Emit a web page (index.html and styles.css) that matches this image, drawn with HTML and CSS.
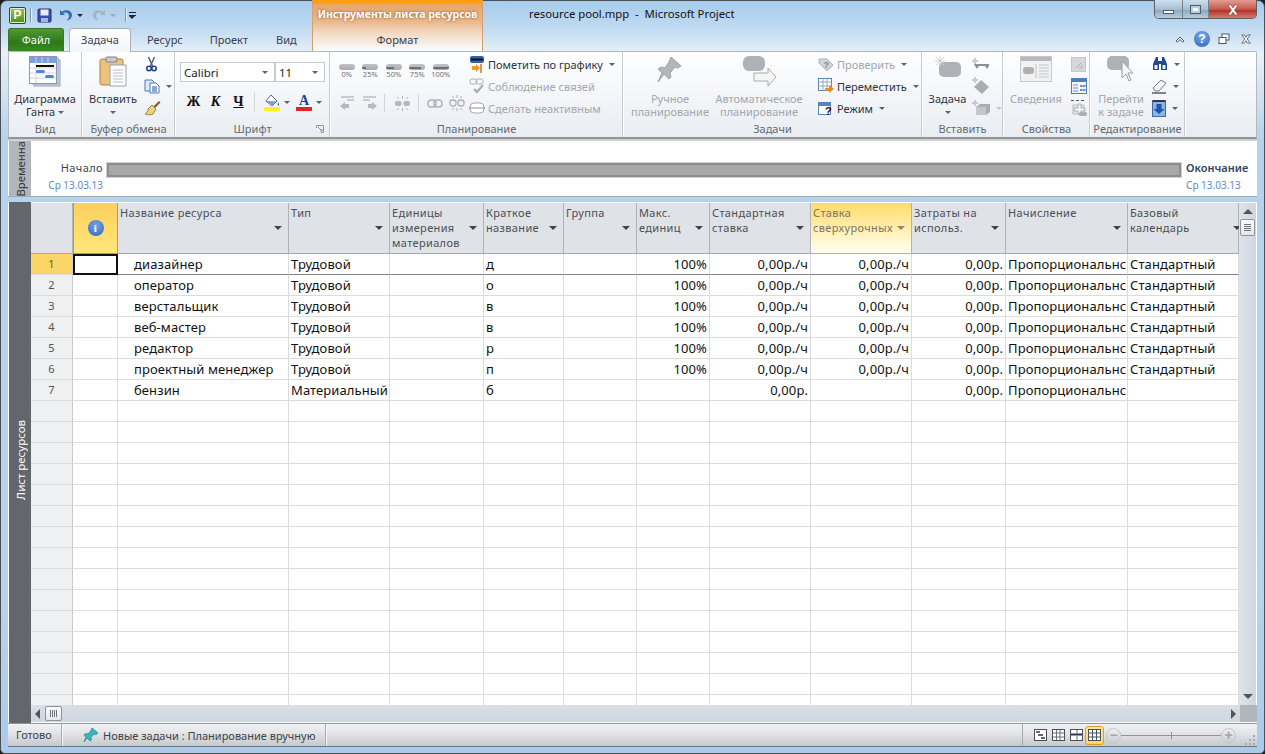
FILE: index.html
```html
<!DOCTYPE html>
<html lang="ru">
<head>
<meta charset="utf-8">
<title>resource pool.mpp - Microsoft Project</title>
<link rel="stylesheet" href="styles.css">
</head>
<body>
<div class="window">
  <header class="chrome">
    <div class="chrome-left">
      <div class="qat">
        <span class="app-logo">P</span>
        <span class="qat-sep"></span>
        <svg class="qat-save" width="15" height="15" viewBox="0 0 15 15"><rect x="1" y="1" width="13" height="13" rx="1" fill="#3b4fa8" stroke="#27306f"/><rect x="3.5" y="1.5" width="8" height="6" fill="#e8ecf6"/><rect x="4" y="10" width="7" height="4" fill="#a9b4d8"/></svg>
        <svg class="qat-undo" width="14" height="14" viewBox="0 0 14 14"><path d="M1 2v5h5L4.2 5.2C6.5 3.6 10 4.6 10 8c0 2-1 3.400-2.500 4.500C11 12 13 9.800 13 7.200 13 2.700 7.500.5 3.200 3.700z" fill="#2f6db5"/></svg>
        <span class="qat-arrow"></span>
        <svg class="qat-redo" width="14" height="14" viewBox="0 0 14 14"><path d="M13 2v5H8l1.800-1.800C7.500 3.600 4 4.600 4 8c0 2 1 3.400 2.500 4.500C3 12 1 9.800 1 7.200 1 2.700 6.500.5 10.800 3.700z" fill="#a9b2ba"/></svg>
        <span class="qat-arrow muted"></span>
        <span class="qat-sep"></span>
        <span class="qat-custom"></span>
      </div>
      <nav class="tabs">
        <span class="tab-file">Файл</span>
        <span class="tab tab-active">Задача</span>
        <span class="tab tab-res">Ресурс</span>
        <span class="tab tab-proj">Проект</span>
        <span class="tab tab-view">Вид</span>
      </nav>
    </div>
    <div class="context">
      <div class="context-title">Инструменты листа ресурсов</div>
      <div class="context-tab">Формат</div>
    </div>
    <div class="title-wrap"><div class="title">resource pool.mpp&nbsp; -&nbsp; Microsoft Project</div></div>
    <div class="chrome-right">
      <div class="win-buttons">
        <span class="win-btn win-min"><i></i></span>
        <span class="win-btn win-max"><i></i></span>
        <span class="win-btn win-close"><svg width="14" height="12" viewBox="0 0 14 12"><path d="M2 1h3l2 3 2-3h3L8.500 6 12 11H9L7 8l-2 3H2l3.500-5z" fill="#fff" stroke="#7b5350" stroke-width=".6"/></svg></span>
      </div>
      <div class="help-row">
        <svg class="h-up" width="10" height="8" viewBox="0 0 10 8"><path d="M1 6l4-4 4 4-1.500 1L5 4.600 2.500 7z" fill="#fff" stroke="#4c5966"/></svg>
        <span class="help">?</span>
        <svg class="h-rest" width="12" height="12" viewBox="0 0 12 12"><rect x="4" y="1" width="7" height="6" fill="#fff" stroke="#4c5966"/><rect x="1" y="4.500" width="7" height="6" fill="#fff" stroke="#4c5966"/></svg>
        <svg class="h-x" width="12" height="10" viewBox="0 0 14 12"><path d="M2 1h3l2 3 2-3h3L8.500 6 12 11H9L7 8l-2 3H2l3.500-5z" fill="#fff" stroke="#4c5966"/></svg>
      </div>
    </div>
  </header>

  <section class="ribbon">
    <div class="group g-view">
      <div class="group-body center">
        <div class="big w-gantt">
          <div class="big-icon"><svg width="32" height="32" viewBox="0 0 32 32"><rect x="5" y="4" width="26" height="26" fill="#d5dbe6" stroke="#9aa4b8"/><rect x="3" y="2" width="26" height="26" fill="#e6eaf1" stroke="#9aa4b8"/><rect x=".5" y=".5" width="27" height="27" fill="#fff" stroke="#8b97b3"/><rect x="1" y="1" width="26" height="6" fill="#7b9fe0"/><path d="M7 1v26M13 1v6M19 1v6M1 12h26M1 17h26M1 22h26" stroke="#c9d3e6"/><rect x="7" y="9" width="18" height="2" fill="#111"/><rect x="7" y="14" width="9" height="3" rx="1.500" fill="#4f87d6"/><rect x="16" y="19" width="9" height="3" rx="1.500" fill="#4f87d6"/></svg></div>
          <span>Диаграмма</span><span>Ганта <i class="dd"></i></span>
        </div>
      </div>
      <div class="group-label">Вид</div>
    </div>
    <div class="group g-clip">
      <div class="group-body">
        <div class="big w-paste">
          <div class="big-icon"><svg width="28" height="32" viewBox="0 0 28 32"><rect x="1" y="3" width="23" height="26" rx="2" fill="#eec27a" stroke="#a98348"/><rect x="7" y="1" width="11" height="5" rx="1" fill="#c9ccd2" stroke="#7c7f85"/><path d="M11 9h16v21H11z" fill="#fff" stroke="#9aa0a8"/><path d="M14 14h10M14 17h10M14 20h10M14 23h10M14 26h10" stroke="#b7bcc4"/></svg></div>
          <span>Вставить</span><span><i class="dd"></i></span>
        </div>
        <div class="small-col icons-only clip-col">
          <div class="small"><svg class="i-scissors" width="11" height="16" viewBox="0 0 11 16"><path d="M2.500 1l4 9M8.500 1l-4 9" stroke="#50637a" stroke-width="1.500"/><circle cx="3" cy="12.500" r="2.200" fill="none" stroke="#24408c" stroke-width="1.600"/><circle cx="8" cy="12.500" r="2.200" fill="none" stroke="#24408c" stroke-width="1.600"/></svg></div>
          <div class="small"><svg width="16" height="15" viewBox="0 0 16 15"><path d="M1 1h7l2 2v9H1z" fill="#dfe9f7" stroke="#4c79b8"/><path d="M6 4h6l3 3v7H6z" fill="#fff" stroke="#4c79b8"/><path d="M8 8h5M8 10h5M8 12h5" stroke="#274e92"/></svg><i class="dd d-gap"></i></div>
          <div class="small"><svg width="17" height="16" viewBox="0 0 17 16"><path d="M9 7l6-6 1.500 1.500-6 6z" fill="#7d5b33"/><path d="M8 5l4 4-3 5c-3 1-6 1-8 0 2-1 3-3 3-5z" fill="#efd37a" stroke="#9a8042"/></svg></div>
        </div>
      </div>
      <div class="group-label">Буфер обмена</div>
    </div>
    <div class="group g-font">
      <div class="group-body col">
        <div class="font-row">
          <span class="select sel-font">Calibri<i class="dd"></i></span>
          <span class="select sel-size">11<i class="dd"></i></span>
        </div>
        <div class="font-fmt">
          <b class="f-b">Ж</b><b class="f-i">К</b><b class="f-u">Ч</b>
          <span class="fmt-sep"></span>
          <span class="fmt-icon"><svg width="16" height="17" viewBox="0 0 16 17"><path d="M7 1l6 6-5 5-6-5z" fill="#fff" stroke="#4c6a96"/><path d="M2 7h10l-4 5z" fill="#7fa3d4"/><path d="M14 8c1 2 1.500 3 .5 4-1-1-1-2-.5-4z" fill="#3a5f9c"/><rect y="13" width="16" height="4" fill="#ffef1e"/></svg><i class="dd d-gap"></i></span>
          <span class="fmt-icon f-color"><span class="a-glyph">A</span><i class="dd d-gap"></i></span>
        </div>
      </div>
      <div class="group-label">Шрифт<svg class="launcher" width="8" height="8" viewBox="0 0 8 8"><path d="M.5 3V.5H7.500V7.500H5" fill="none" stroke="#8e959c"/><path d="M2 2l4 4M4 6h2V4" fill="none" stroke="#8e959c"/></svg></div>
    </div>
    <div class="group g-plan">
      <div class="group-body">
        <div class="plan-left">
          <div class="pct-row">
            <span class="pct"><i class="pbar"></i>0%</span>
            <span class="pct"><i class="pbar p25"></i>25%</span>
            <span class="pct"><i class="pbar p50"></i>50%</span>
            <span class="pct"><i class="pbar p75"></i>75%</span>
            <span class="pct"><i class="pbar p100"></i>100%</span>
          </div>
          <div class="link-row">
            <svg width="17" height="15" viewBox="0 0 17 15"><path d="M2 1h13M8 4h7" stroke="#9fa5ab"/><path d="M1 10l5-4v2h4v4H6v2z" fill="#b5babf"/></svg>
            <svg class="l-in" width="17" height="15" viewBox="0 0 17 15"><path d="M2 1h13M2 4h7" stroke="#9fa5ab"/><path d="M16 10l-5-4v2H7v4h4v2z" fill="#b5babf"/></svg>
            <span class="fmt-sep plan-sep"></span>
            <svg class="l-split" width="17" height="17" viewBox="0 0 17 17"><rect x="1" y="6" width="6.500" height="5" rx="2" fill="#b4b8bc"/><rect x="9.500" y="6" width="6.500" height="5" rx="2" fill="#b4b8bc"/><path d="M8.500 1v3M8.500 13v3M3 2l2 2M14 2l-2 2M3 15l2-2M14 15l-2-2" stroke="#b4b8bc"/></svg>
            <span class="fmt-sep plan-sep2"></span>
            <svg class="l-link" width="16" height="9" viewBox="0 0 16 9"><rect x="1" y="1" width="8" height="7" rx="3" fill="none" stroke="#aeb2b7" stroke-width="1.400"/><rect x="7" y="1" width="8" height="7" rx="3" fill="none" stroke="#aeb2b7" stroke-width="1.400"/></svg>
            <svg class="l-unlink" width="16" height="16" viewBox="0 0 16 16"><rect x="1" y="5" width="6" height="6" rx="2.500" fill="none" stroke="#aeb2b7" stroke-width="1.300"/><rect x="9" y="5" width="6" height="6" rx="2.500" fill="none" stroke="#aeb2b7" stroke-width="1.300"/><path d="M8 0v3M8 13v3M3 1l2 2M13 1l-2 2M3 15l2-2M13 15l-2-2" stroke="#aeb2b7"/></svg>
          </div>
        </div>
        <div class="small-col plan-col">
          <div class="small"><svg width="16" height="18" viewBox="0 0 16 18"><rect x="1" y="1" width="14" height="7" rx="2" fill="#2e62b4"/><rect x="2" y="3.500" width="12" height="2" fill="#111"/><path d="M12 9v9" stroke="#d07a1c" stroke-width="1.500"/><path d="M3 11h4V9l4 4-4 4v-2H3z" fill="#f19a23"/></svg><span>Пометить по графику</span><i class="dd d-gap"></i></div>
          <div class="small dis"><svg width="16" height="16" viewBox="0 0 16 16"><rect x="1" y="1" width="7" height="5" rx="2" fill="none" stroke="#aeb2b7"/><rect x="7" y="1" width="7" height="5" rx="2" fill="none" stroke="#aeb2b7"/><path d="M5 11l3 3 6-7" fill="none" stroke="#a4a8ad" stroke-width="2"/></svg><span>Соблюдение связей</span></div>
          <div class="small dis"><svg width="16" height="12" viewBox="0 0 16 12"><rect x="1" y="1" width="14" height="10" rx="4" fill="#fff" stroke="#a5a9ae"/><path d="M0 6h16" stroke="#8f9398"/></svg><span>Сделать неактивным</span></div>
        </div>
      </div>
      <div class="group-label">Планирование</div>
    </div>
    <div class="group g-tasks">
      <div class="group-body">
        <div class="big dis w-manual">
          <div class="big-icon"><svg width="26" height="28" viewBox="0 0 26 28"><path d="M14 1l10 9-3 2-3-1-5 6 1 4-2 2-5-5-6 8 4-9-4-4 3-2 4 1 4-6z" fill="#b3b6ba" stroke="#9ea1a5"/></svg></div>
          <span>Ручное</span><span>планирование</span>
        </div>
        <div class="big dis w-auto">
          <div class="big-icon"><svg width="34" height="32" viewBox="0 0 34 32"><rect x="1" y="0" width="22" height="15" rx="6" fill="#aeb1b5"/><path d="M12 17h14v-5l8 9-8 9v-5H12z" fill="#f5f5f6" stroke="#a8abaf"/></svg></div>
          <span>Автоматическое</span><span>планирование</span>
        </div>
        <div class="small-col task-col">
          <div class="small dis"><svg width="16" height="16" viewBox="0 0 16 16"><path d="M1 3h8l6 6-6 6-8-8z" fill="#d2d4d7" stroke="#aeb1b5"/><text x="5.500" y="12" class="q">?</text></svg><span>Проверить</span><i class="dd d-gap"></i></div>
          <div class="small"><svg width="16" height="16" viewBox="0 0 16 16"><rect x=".5" y=".5" width="13" height="12" fill="#fff" stroke="#5b82ba"/><path d="M.5 4h13M.5 8h13M5 .5v12M9 .5v12" stroke="#8fa9cf"/><path d="M7 10h4V7l5 4-5 4v-2H7z" fill="#ee8a1c"/></svg><span>Переместить</span><i class="dd d-gap"></i></div>
          <div class="small"><svg width="16" height="16" viewBox="0 0 16 16"><rect x=".5" y="2.500" width="12" height="12" fill="#fff" stroke="#5b82ba"/><rect x="1" y="3" width="11" height="3" fill="#5b82ba"/><text x="7" y="15" class="qq">?</text></svg><span>Режим</span><i class="dd d-gap"></i></div>
        </div>
      </div>
      <div class="group-label">Задачи</div>
    </div>
    <div class="group g-insert">
      <div class="group-body">
        <div class="big w-itask">
          <div class="big-icon"><svg width="28" height="22" viewBox="0 0 28 22"><rect x="5" y="6" width="22" height="15" rx="5" fill="#aeb1b5"/><path d="M6 0v10M1 5h10M2 1l8 8M10 1L2 9" stroke="#cfd1d4"/></svg></div>
          <span>Задача</span><span><i class="dd"></i></span>
        </div>
        <div class="small-col icons-only ins-col">
          <div class="small"><svg width="18" height="13" viewBox="0 0 18 13"><path d="M3 0v6M0 3h6" stroke="#c9cbce" stroke-width="2"/><path d="M2 6h15v2l-2 3-2-3H7l-2 3-2-3z" fill="#8d9094"/></svg></div>
          <div class="small"><svg width="18" height="18" viewBox="0 0 18 18"><path d="M3 0v6M0 3h6" stroke="#c9cbce" stroke-width="2"/><path d="M9 3l8 7-7 7-8-7z" fill="#aaadb1"/></svg></div>
          <div class="small"><svg width="18" height="16" viewBox="0 0 18 16"><path d="M3 0v6M0 3h6" stroke="#c9cbce" stroke-width="2"/><path d="M4 7h10v8H4z" fill="#c4c6c9"/><path d="M4 7l4-3h10l-4 3zM14 7l4-3v8l-4 3z" fill="#a9acb0"/></svg><i class="dd d-gap dim"></i></div>
        </div>
      </div>
      <div class="group-label">Вставить</div>
    </div>
    <div class="group g-prop">
      <div class="group-body">
        <div class="big dis w-info">
          <div class="big-icon"><svg width="32" height="26" viewBox="0 0 32 26"><rect x=".5" y=".5" width="31" height="25" fill="#f2f2f3" stroke="#c7c9cc"/><rect x="1" y="1" width="30" height="4" fill="#b6b8bb"/><rect x="3" y="11" width="11" height="7" rx="3" fill="#aeb0b3"/><path d="M16 8v14M19 9h10M19 12h10M19 15h10M19 18h10M19 21h10" stroke="#c3c5c8"/></svg></div>
          <span>Сведения</span>
        </div>
        <div class="small-col icons-only prop-col">
          <div class="small"><svg width="15" height="15" viewBox="0 0 15 15"><rect x=".5" y=".5" width="14" height="14" fill="#d5d7da" stroke="#c5c7ca"/><path d="M5 11l5-5M8 11h3V8" stroke="#b0b2b5" fill="none"/></svg></div>
          <div class="small"><svg width="16" height="16" viewBox="0 0 16 16"><rect x=".5" y=".5" width="15" height="15" fill="#f3f7fc" stroke="#4e7fbd"/><rect x="1" y="1" width="14" height="3" fill="#4e7fbd"/><path d="M2 7h5M2 10h5M2 13h5" stroke="#6d8fbf"/><rect x="9" y="7" width="2.500" height="2" fill="#6d8fbf"/><rect x="12" y="7" width="2.500" height="2" fill="#6d8fbf"/><rect x="9" y="11" width="2.500" height="2" fill="#6d8fbf"/><rect x="12" y="11" width="2.500" height="2" fill="#6d8fbf"/></svg></div>
          <div class="small"><svg width="16" height="17" viewBox="0 0 16 17"><path d="M0 .5h3M5 .5h3M10 .5h3" stroke="#555"/><path d="M2 5h11v9H2z" fill="#e5e6e8" stroke="#bbbdc0"/><path d="M7 4h3v4h4v3h-4v3H7v-3H3V8h4z" fill="#f3f3f4" stroke="#aeb0b3"/><rect x="8" y="12" width="8" height="4" rx="1.500" fill="#aeb0b3"/></svg></div>
        </div>
      </div>
      <div class="group-label">Свойства</div>
    </div>
    <div class="group g-edit">
      <div class="group-body">
        <div class="big dis w-goto">
          <div class="big-icon"><svg width="28" height="28" viewBox="0 0 28 28"><rect x="0" y="0" width="22" height="14" rx="5" fill="#aeb1b5"/><path d="M15 5v17l4-4 3 7 2-1-3-7h5z" fill="#f3f3f4" stroke="#9da0a4"/></svg></div>
          <span>Перейти</span><span>к задаче</span>
        </div>
        <div class="small-col icons-only edit-col">
          <div class="small"><svg width="16" height="14" viewBox="0 0 16 14"><path d="M4 0h2v4h4V0h2l3 7v6H9V7H7v6H1V7z" fill="#24478f"/><rect x="2.500" y="8" width="3" height="4" fill="#e8eefb"/><rect x="10.500" y="8" width="3" height="4" fill="#e8eefb"/></svg><i class="dd d-gap"></i></div>
          <div class="small"><svg width="15" height="15" viewBox="0 0 15 15"><path d="M1 9l8-8 5 3-7 8H3z" fill="#f2f4f8" stroke="#6e7b91"/><path d="M0 14h14" stroke="#111"/></svg><i class="dd d-gap"></i></div>
          <div class="small"><svg width="14" height="17" viewBox="0 0 14 17"><rect x=".5" y="1" width="13" height="15.500" fill="#8eb2e2" stroke="#3d69ad"/><path d="M.5 1h13" stroke="#111" stroke-width="1.400"/><path d="M4.500 4h5v5h3L7 14 1.500 9h3z" fill="#1e55a8"/></svg><i class="dd d-gap"></i></div>
        </div>
      </div>
      <div class="group-label">Редактирование</div>
    </div>
  </section>

  <section class="timeline">
    <div class="timeline-tag"><span class="v-text">Временна</span></div>
    <div class="tl-start"><div class="tl-name">Начало</div><div class="tl-date">Ср 13.03.13</div></div>
    <div class="tl-bar"></div>
    <div class="tl-end"><div class="tl-name strong">Окончание</div><div class="tl-date">Ср 13.03.13</div></div>
  </section>

  <section class="sheet">
    <div class="side"><span class="v-text">Лист ресурсов</span></div>
    <div class="sheet-main">
      <div class="sheet-top">
        <div class="table-wrap">
          <table class="grid">
            <colgroup>
              <col class="c-h"><col class="c-info"><col class="c-name"><col class="c-type"><col class="c-units"><col class="c-short"><col class="c-group"><col class="c-max"><col class="c-std"><col class="c-over"><col class="c-cost"><col class="c-acc"><col class="c-cal">
            </colgroup>
            <thead>
              <tr>
                <th class="corner"></th>
                <th class="hot info-h"><span class="info-dot">i</span></th>
                <th>Название ресурса<i class="fa"></i></th>
                <th>Тип<i class="fa"></i></th>
                <th>Единицы измерения материалов<i class="fa"></i></th>
                <th>Краткое<br>название<i class="fa"></i></th>
                <th>Группа<i class="fa"></i></th>
                <th>Макс.<br>единиц<i class="fa"></i></th>
                <th>Стандартная<br>ставка<i class="fa"></i></th>
                <th class="soft">Ставка<br>сверхурочных<i class="fa"></i></th>
                <th>Затраты на<br>использ.<i class="fa"></i></th>
                <th>Начисление<i class="fa"></i></th>
                <th>Базовый<br>календарь<i class="fa"></i></th>
              </tr>
            </thead>
            <tbody>
              <tr class="first"><th class="rh rh-on">1</th><td class="sel"></td><td class="nm">диазайнер</td><td>Трудовой</td><td></td><td>д</td><td></td><td class="r">100%</td><td class="r">0,00р./ч</td><td class="r">0,00р./ч</td><td class="r">0,00р.</td><td class="clip">Пропорциональнс</td><td>Стандартный</td></tr>
              <tr><th class="rh">2</th><td></td><td class="nm">оператор</td><td>Трудовой</td><td></td><td>о</td><td></td><td class="r">100%</td><td class="r">0,00р./ч</td><td class="r">0,00р./ч</td><td class="r">0,00р.</td><td class="clip">Пропорциональнс</td><td>Стандартный</td></tr>
              <tr><th class="rh">3</th><td></td><td class="nm">верстальщик</td><td>Трудовой</td><td></td><td>в</td><td></td><td class="r">100%</td><td class="r">0,00р./ч</td><td class="r">0,00р./ч</td><td class="r">0,00р.</td><td class="clip">Пропорциональнс</td><td>Стандартный</td></tr>
              <tr><th class="rh">4</th><td></td><td class="nm">веб-мастер</td><td>Трудовой</td><td></td><td>в</td><td></td><td class="r">100%</td><td class="r">0,00р./ч</td><td class="r">0,00р./ч</td><td class="r">0,00р.</td><td class="clip">Пропорциональнс</td><td>Стандартный</td></tr>
              <tr><th class="rh">5</th><td></td><td class="nm">редактор</td><td>Трудовой</td><td></td><td>р</td><td></td><td class="r">100%</td><td class="r">0,00р./ч</td><td class="r">0,00р./ч</td><td class="r">0,00р.</td><td class="clip">Пропорциональнс</td><td>Стандартный</td></tr>
              <tr><th class="rh">6</th><td></td><td class="nm">проектный менеджер</td><td>Трудовой</td><td></td><td>п</td><td></td><td class="r">100%</td><td class="r">0,00р./ч</td><td class="r">0,00р./ч</td><td class="r">0,00р.</td><td class="clip">Пропорциональнс</td><td>Стандартный</td></tr>
              <tr><th class="rh">7</th><td></td><td class="nm">бензин</td><td>Материальный</td><td></td><td>б</td><td></td><td></td><td class="r">0,00р.</td><td></td><td class="r">0,00р.</td><td class="clip">Пропорциональнс</td><td></td></tr>
              <tr><th class="rh"></th><td></td><td></td><td></td><td></td><td></td><td></td><td></td><td></td><td></td><td></td><td></td><td></td></tr>
              <tr><th class="rh"></th><td></td><td></td><td></td><td></td><td></td><td></td><td></td><td></td><td></td><td></td><td></td><td></td></tr>
              <tr><th class="rh"></th><td></td><td></td><td></td><td></td><td></td><td></td><td></td><td></td><td></td><td></td><td></td><td></td></tr>
              <tr><th class="rh"></th><td></td><td></td><td></td><td></td><td></td><td></td><td></td><td></td><td></td><td></td><td></td><td></td></tr>
              <tr><th class="rh"></th><td></td><td></td><td></td><td></td><td></td><td></td><td></td><td></td><td></td><td></td><td></td><td></td></tr>
              <tr><th class="rh"></th><td></td><td></td><td></td><td></td><td></td><td></td><td></td><td></td><td></td><td></td><td></td><td></td></tr>
              <tr><th class="rh"></th><td></td><td></td><td></td><td></td><td></td><td></td><td></td><td></td><td></td><td></td><td></td><td></td></tr>
              <tr><th class="rh"></th><td></td><td></td><td></td><td></td><td></td><td></td><td></td><td></td><td></td><td></td><td></td><td></td></tr>
              <tr><th class="rh"></th><td></td><td></td><td></td><td></td><td></td><td></td><td></td><td></td><td></td><td></td><td></td><td></td></tr>
              <tr><th class="rh"></th><td></td><td></td><td></td><td></td><td></td><td></td><td></td><td></td><td></td><td></td><td></td><td></td></tr>
              <tr><th class="rh"></th><td></td><td></td><td></td><td></td><td></td><td></td><td></td><td></td><td></td><td></td><td></td><td></td></tr>
              <tr><th class="rh"></th><td></td><td></td><td></td><td></td><td></td><td></td><td></td><td></td><td></td><td></td><td></td><td></td></tr>
              <tr><th class="rh"></th><td></td><td></td><td></td><td></td><td></td><td></td><td></td><td></td><td></td><td></td><td></td><td></td></tr>
              <tr><th class="rh"></th><td></td><td></td><td></td><td></td><td></td><td></td><td></td><td></td><td></td><td></td><td></td><td></td></tr>
              <tr><th class="rh"></th><td></td><td></td><td></td><td></td><td></td><td></td><td></td><td></td><td></td><td></td><td></td><td></td></tr>
            </tbody>
          </table>
        </div>
        <div class="vscroll">
          <i class="tri tri-up"></i>
          <span class="thumb-v"></span>
          <i class="tri tri-down"></i>
        </div>
      </div>
      <div class="hscroll">
        <i class="tri tri-left"></i>
        <span class="thumb-h"></span>
        <i class="tri tri-right"></i>
        <span class="hcorner"></span>
      </div>
    </div>
  </section>

  <footer class="status">
    <span class="st-ready">Готово</span>
    <span class="st-mode">
      <svg width="16" height="16" viewBox="0 0 16 16"><path d="M9 1l6 5-2 1.500-2-.5-3 3.500.5 2.500-1.500 1L4 11 1 15l2-5-2-2 1.500-1.500 2.500.5 3-3.500z" fill="#38b8bd" stroke="#1d7f86" stroke-width=".7"/></svg>
      Новые задачи : Планирование вручную
    </span>
    <span class="st-fill"></span>
    <span class="st-views">
      <span class="vw"><svg width="13" height="12" viewBox="0 0 13 12"><rect x=".5" y=".5" width="12" height="11" fill="#fff" stroke="#4b5058"/><path d="M2 3h4M4 6h5M7 9h4" stroke="#30343a" stroke-width="1.400"/></svg></span>
      <span class="vw"><svg width="13" height="12" viewBox="0 0 13 12"><rect x=".5" y=".5" width="12" height="11" fill="#fff" stroke="#4b5058"/><path d="M4.500 1v10M8 1v10M1 4h11M1 8h11" stroke="#6d7278"/></svg></span>
      <span class="vw"><svg width="13" height="12" viewBox="0 0 13 12"><rect x=".5" y=".5" width="12" height="11" fill="#fff" stroke="#4b5058"/><path d="M1 5.500h11" stroke="#30343a" stroke-width="2"/><path d="M7 1v4M7 7v4" stroke="#6d7278"/></svg></span>
      <span class="vw vw-on"><svg width="13" height="12" viewBox="0 0 13 12"><rect x=".5" y=".5" width="12" height="11" fill="#fff" stroke="#4b5058"/><path d="M4.500 1v10M8.500 1v10M1 4h11M1 8h11" stroke="#4b5058"/></svg></span>
    </span>
    <span class="zoom">
      <span class="zb">−</span>
      <span class="ztrack"><i></i></span>
      <span class="zb">+</span>
    </span>
    <svg class="grip" width="11" height="11" viewBox="0 0 11 11"><path d="M9 1h2v2H9zM5 5h2v2H5zM9 5h2v2H9zM1 9h2v2H1zM5 9h2v2H5zM9 9h2v2H9z" fill="#a7abb1"/></svg>
  </footer>
</div>
</body>
</html>
```
FILE: styles.css
```css
* { box-sizing: border-box; }
html, body { margin: 0; height: 100%; }
body { background: #1c1f22; overflow: hidden; font-family: "Noto Sans", "Open Sans", sans-serif; font-size: 11px; color: #3c4046; }
i { font-style: normal; display: inline-block; }

.window {
  width: 1265px; height: 754px; padding: 0 8px 6px 8px;
  border: 1px solid #4a5056; border-radius: 7px 7px 5px 5px;
  display: flex; flex-direction: column;
  background: linear-gradient(#a6cbec 0, #c3dcf2 30px, #e8f1f9 52px, #b6d2ec 140px, #b7d3ed 600px, #a9cbe9 100%);
}
.window > * { margin-left: -1px; margin-right: -1px; }

/* title + tabs */
.chrome { height: 50px; display: flex; flex: none; }
.chrome-left { width: 304px; display: flex; flex-direction: column; flex: none; }
.qat { height: 27px; display: flex; align-items: center; padding-top: 1px; }
.app-logo { width: 17px; height: 17px; margin-left: 1px; border: 1px solid #2d4f12; border-radius: 2px; background: linear-gradient(#9cc255, #4f8a25); color: #fff; font: bold 12px/15px "Liberation Sans", sans-serif; text-align: center; box-shadow: inset 0 0 0 1px #e7f0c8; }
.qat-sep { width: 1px; height: 14px; margin: 0 6px; background: #7f93a6; box-shadow: 1px 0 0 #e6f0f9; }
.qat-sep:nth-child(2) { margin: 0 6px 0 4px; }
.qat-save { margin-right: 7px; }
.qat-arrow { width: 0; height: 0; margin: 1px 12px 0 4px; border: 3px solid transparent; border-top: 3px solid #1b2836; border-bottom: 0; }
.qat-arrow.muted { margin-right: 3px; border-top-color: #a0aab3; }
.qat-redo { margin-left: -3px; }
.qat-custom { width: 7px; height: 7px; margin-left: -3px; background: linear-gradient(#1b2836 0, #1b2836 1px, transparent 1px, transparent 3px, #1b2836 3px, #1b2836 4px, transparent 4px); position: relative; }
.qat-custom::after { content: ""; position: absolute; left: 0; top: 4px; border: 3.500px solid transparent; border-top-color: #1b2836; border-bottom: 0; }
.tabs { height: 23px; display: flex; align-items: stretch; font-size: 11px; }
.tab-file { width: 56px; background: linear-gradient(#4f9a32, #2f7817 60%, #3c8a24); border: 1px solid #3f6f2a; border-bottom: 0; border-radius: 3px 3px 0 0; color: #fff; text-align: center; line-height: 21px; }
.tab { line-height: 24px; color: #3c4046; }
.tab-active { width: 62px; margin-left: 5px; background: linear-gradient(#fdfeff, #f2f6fa); border: 1px solid #aab3bc; border-bottom: 0; border-radius: 3px 3px 0 0; text-align: center; height: 24px; z-index: 1; line-height: 22px; }
.tab-res { margin-left: 16px; }
.tab-proj { margin-left: 27px; }
.tab-view { margin-left: 28px; }

.context { width: 171px; flex: none; display: flex; flex-direction: column; background: linear-gradient(#ff9e0a 0, #ff9e0a 3px, #e8a668 4px, #eab98d 22px, #f3dcc8 34px, #fafbfc 50px); border-left: 1px solid #d3a06a; border-right: 1px solid #d3a06a; margin-top: -1px; height: 52px; }
.context-title { height: 29px; padding-top: 7px; color: #fff; font-weight: 700; font-size: 10.500px; text-align: center; text-shadow: 0 0 3px #8a4a18; }
.context-tab { height: 22px; line-height: 22px; text-align: center; font-size: 11px; }

.title-wrap { flex: 1; padding: 5px 0 0 46px; }
.title { color: #111; font-size: 11.300px; white-space: nowrap; }
.chrome-right { width: 115px; flex: none; display: flex; flex-direction: column; align-items: flex-end; }
.win-buttons { display: flex; height: 19px; margin-top: -1px; border: 1px solid #5a6068; border-top: 0; border-radius: 0 0 5px 5px; overflow: hidden; }
.win-btn { height: 19px; display: flex; align-items: center; justify-content: center; border-right: 1px solid #77818b; }
.win-min { width: 28px; }
.win-max { width: 26px; }
.win-min, .win-max { background: linear-gradient(#cfe0ef, #a4bdd3 50%, #8ea9c0 55%, #bdd2e4); }
.win-min i { width: 11px; height: 4px; margin-top: 5px; background: #fff; border: 1px solid #4f5c69; }
.win-max i { width: 11px; height: 9px; background: #fff; border: 1px solid #4f5c69; box-shadow: inset 0 0 0 2px #b7cde0; }
.win-close { width: 47px; border-right: 0; background: linear-gradient(#e39d93, #c4564a 50%, #b33327 55%, #d98478); }
.help-row { display: flex; align-items: center; height: 18px; margin-top: 11px; margin-right: 5px; }
.h-up { margin-right: 9px; }
.h-rest { margin: 0 10px 0 8px; }
.help { width: 16px; height: 16px; border-radius: 50%; background: radial-gradient(circle at 50% 30%, #79aeea, #2a63b7); color: #fff; font: bold 12px/16px "Liberation Sans", sans-serif; text-align: center; }

/* ribbon */
.ribbon { height: 88px; flex: none; display: flex; border: 1px solid #b3b9bf; border-bottom: 2px solid #8e959c; border-radius: 2px 2px 0 0; background: linear-gradient(#fdfeff, #f3f5f8 55%, #e9edf1 100%); }
.group { flex: none; display: flex; flex-direction: column; border-right: 1px solid #c7ccd2; box-shadow: 1px 0 0 #fff; margin-right: 1px; }
.group-body { height: 70px; padding-top: 1px; display: flex; }
.group-body.center { justify-content: center; }
.group-body.col { flex-direction: column; }
.group-label { position: relative; height: 14px; line-height: 13px; text-align: center; color: #5f6a75; font-size: 11px; }
.g-view { width: 73px; }
.g-clip { width: 92px; }
.g-font { width: 154px; }
.g-plan { width: 292px; }
.g-tasks { width: 298px; }
.g-insert { width: 80px; }
.g-prop { width: 86px; }
.g-edit { width: 94px; }
.big { display: flex; flex-direction: column; align-items: center; line-height: 13px; white-space: nowrap; color: #30343a; }
.big-icon { height: 39px; display: flex; justify-content: center; align-items: flex-start; padding-top: 3px; }
.dis, .dis span { color: #a3a7ad; }
.w-gantt { width: 73px; }
.w-paste { width: 52px; margin-left: 4px; }
.clip-col { margin-left: 5px; }
.i-scissors { margin-left: 2px; }
.small-col { display: flex; flex-direction: column; }
.small { height: 22px; display: flex; align-items: center; gap: 3px; white-space: nowrap; color: #30343a; }
.small.dis { color: #a3a7ad; }
.dd { width: 0; height: 0; border: 3px solid transparent; border-top: 3px solid #5c6268; border-bottom: 0; vertical-align: 2px; }
.d-gap { margin-left: 3px; }
.dim { border-top-color: #c2c5c9; }
.launcher { position: absolute; right: 5px; top: 3px; }

.font-row { display: flex; margin: 9px 0 0 4px; }
.select { height: 20px; background: #fff; border: 1px solid #c5cbd2; display: flex; align-items: center; justify-content: space-between; padding: 0 6px 0 3px; color: #222; font: 11.500px "Noto Sans", sans-serif; }
.sel-font { width: 95px; }
.sel-size { width: 50px; }
.font-fmt { display: flex; align-items: center; height: 22px; margin: 9px 0 0 7px; }
.font-fmt b { color: #111; font: bold 14px "Liberation Serif", serif; }
.f-b { width: 21px; text-align: center; }
.f-i { width: 23px; text-align: center; font-style: italic !important; }
.f-u { width: 23px; text-align: center; text-decoration: underline; }
.fmt-sep { width: 1px; height: 20px; background: #d2d6db; margin: 0 9px 0 4px; }
.fmt-icon { display: flex; align-items: center; }
.fmt-icon .d-gap { margin-left: 4px; }
.f-color { margin-left: 6px; }
.a-glyph { width: 16px; height: 17px; color: #1d3f8f; font: bold 14px/13px "Liberation Serif", serif; text-align: center; border-bottom: 4px solid #e8202c; }

.plan-left { width: 136px; padding: 3px 0 0 8px; }
.pct-row { display: flex; height: 23px; margin-left: -4px; }
.pct { width: 23.500px; display: flex; flex-direction: column; align-items: center; font-size: 7.500px; line-height: 9px; color: #707479; padding-top: 8px; }
.pbar { width: 16px; height: 8px; border-radius: 3px; background: linear-gradient(#c0c3c7, #a8abb0); position: relative; overflow: hidden; }
.pbar::after { content: ""; position: absolute; left: 0; top: 3px; height: 2px; background: #6d7176; }
.p25::after { width: 25%; } .p50::after { width: 50%; } .p75::after { width: 75%; } .p100::after { width: 100%; }
.link-row { display: flex; align-items: center; height: 22px; margin-top: 13px; }
.l-in { margin-left: 5px; }
.plan-sep { margin: 0 9px 0 6px; height: 18px; }
.plan-sep2 { margin: 0 8px 0 7px; height: 18px; }
.l-unlink { margin-left: 6px; }
.plan-col { margin-left: 2px; }

.w-manual { width: 90px; margin-left: 1px; }
.w-auto { width: 92px; margin-left: -2px; }
.task-col { margin-left: 13px; }
.q { font: bold 9px "Liberation Sans", sans-serif; fill: #888; }
.qq { font: bold 11px "Liberation Sans", sans-serif; fill: #111; }

.w-itask { width: 46px; margin-left: 2px; }
.ins-col { margin-left: 2px; }
.w-info { width: 62px; margin-left: 1px; }
.prop-col { margin-left: 4px; }
.w-goto { width: 58px; margin-left: 1px; }
.edit-col { margin-left: 2px; }

/* timeline */
.timeline { height: 57px; margin-top: 1px; flex: none; display: flex; align-items: flex-start; background: #fff; border-top: 1px solid #d3d7db; border-bottom: 1px solid #a6abb0; }
.timeline-tag { width: 22px; margin-left: 1px; height: 100%; background: #b1b6bb; color: #333; display: flex; align-items: center; justify-content: center; font-size: 11.300px; overflow: hidden; flex: none; }
.v-text { writing-mode: vertical-rl; transform: rotate(180deg); white-space: nowrap; }
.tl-start { width: 72px; text-align: right; margin-top: 20px; }
.tl-name { color: #33475a; font-size: 11px; line-height: 14px; letter-spacing: .4px; }
.tl-name.strong { font-weight: 600; letter-spacing: 0; }
.tl-date { color: #5f8bc4; font-size: 10px; margin-top: 3px; line-height: 14px; }
.tl-bar { flex: 1; height: 14px; margin: 22px 0 0 4px; background: #a8a8a8; border: 2px solid #8d8d8d; box-shadow: 0 0 0 1px #d0d0d0; }
.tl-end { width: 71px; margin: 20px 0 0 5px; }

/* sheet */
.sheet { height: 521px; flex: none; display: flex; margin-top: 5px; background: #fff; overflow: hidden; }
.side { width: 22px; margin-left: 1px; flex: none; background: #63666b; color: #fff; display: flex; align-items: center; justify-content: center; font-size: 11.500px; padding-bottom: 5px; }
.sheet-main { flex: 1; min-width: 0; display: flex; flex-direction: column; padding-top: 1px; }
.sheet-top { height: 502px; display: flex; overflow: hidden; flex: none; }
.table-wrap { width: 1208px; flex: none; overflow: hidden; }
.grid { width: 1208px; table-layout: fixed; border-collapse: separate; border-spacing: 0; font-family: "Noto Sans", sans-serif; }
.c-h { width: 42px; } .c-info { width: 45px; } .c-name { width: 171px; } .c-type { width: 101px; } .c-units { width: 94px; } .c-short { width: 80px; } .c-group { width: 73px; } .c-max { width: 73px; } .c-std { width: 101px; } .c-over { width: 101px; } .c-cost { width: 94px; } .c-acc { width: 122px; } .c-cal { width: 111px; }
thead th { height: 51px; position: relative; padding: 2px 2px 0; vertical-align: top; text-align: left; font-weight: 400; font-size: 11px; letter-spacing: .35px; line-height: 15px; color: #4a4f55; background: #dfe2e7; border-right: 1px solid #afb3b8; border-bottom: 1px solid #a4a8ad; }
thead th.hot { background: linear-gradient(#fdcf5f, #ffe878); border: 1px solid #c79a3b; border-top: 0; }
thead th.soft { background: linear-gradient(#ffdb6b, #fff9d5 80%, #fffdf0); border-bottom: 1px solid #e0b242; color: #7c7562; }
.info-h { text-align: center; }
.info-dot { display: block; width: 16px; height: 16px; margin: 15px auto 0; border-radius: 50%; background: radial-gradient(circle at 50% 35%, #7aa5e2, #2f62c0); color: #fff; font: bold 11px/16px "Liberation Serif", serif; text-align: center; }
.fa { position: absolute; right: 6px; top: 23px; width: 0; height: 0; border: 4px solid transparent; border-top: 4px solid #40444a; border-bottom: 0; }
.soft .fa { border-top-color: #8b8677; }
thead th:last-child .fa { right: -3px; }
tbody td, tbody th { height: 21px; padding: 0 2px; border-right: 1px solid #dcdcdc; border-bottom: 1px solid #dcdcdc; font-size: 13px; font-weight: 400; letter-spacing: .1px; color: #111; white-space: nowrap; overflow: hidden; line-height: 20px; background: #fff; }
tbody th.rh { background: #eef0f2; color: #555; font-size: 11px; text-align: center; border-right-color: #c9cccf; }
tbody th.rh-on { background: #fdd566; color: #6a5a30; }
.first td { border-bottom: 1px solid #7e8186; }
td.sel { border: 2px solid #111; }
td.nm { padding-left: 16px; }
td.r { text-align: right; }
td.clip { text-overflow: clip; }

.vscroll { width: 17px; flex: none; background: linear-gradient(90deg, #dfe3ea, #cdd6e2); display: flex; flex-direction: column; align-items: center; }
.tri { width: 0; height: 0; border: 5px solid transparent; display: block; }
.tri-up { margin-top: 6px; border-top: 0; border-bottom: 5px solid #50555c; }
.thumb-v { width: 15px; height: 17px; margin-top: 5px; background: linear-gradient(#fafbfc, #e4e7eb); border: 1px solid #8e959c; border-radius: 2px; position: relative; }
.thumb-v::after { content: ""; position: absolute; left: 3px; right: 3px; top: 4px; height: 7px; background: repeating-linear-gradient(#6d7278 0 1px, transparent 1px 2px); }
.tri-down { margin-top: auto; margin-bottom: 6px; border-bottom: 0; border-top: 5px solid #50555c; }
.hscroll { height: 17px; display: flex; align-items: center; background: linear-gradient(#dadee5, #cfd6e0); padding-left: 4px; flex: none; }
.tri-left { border-left: 0; border-right: 5px solid #50555c; }
.thumb-h { width: 17px; height: 15px; margin-left: 5px; background: linear-gradient(#fafbfc, #e4e7eb); border: 1px solid #8e959c; border-radius: 2px; position: relative; }
.thumb-h::after { content: ""; position: absolute; left: 4px; right: 4px; top: 3px; bottom: 3px; background: repeating-linear-gradient(90deg, #6d7278 0 1px, transparent 1px 2px); }
.tri-right { margin-left: auto; border-right: 0; border-left: 5px solid #50555c; margin-right: 4px; }
.hcorner { width: 17px; height: 17px; background: #b1b6bb; }

/* status */
.status { height: 24px; flex: none; display: flex; align-items: center; background: linear-gradient(#f0f1f3, #e3e5e8 40%, #c6c9cd); border-top: 1px solid #8e959c; border-bottom: 1px solid #6d747b; font-size: 11px; color: #3f444a; }
.st-ready { width: 54px; padding-left: 8px; height: 100%; line-height: 22px; border-right: 1px solid #a7abb0; box-shadow: 1px 0 0 #f5f6f7; }
.st-mode { width: 264px; height: 100%; display: flex; align-items: center; gap: 4px; padding-left: 21px; border-right: 1px solid #a7abb0; box-shadow: 1px 0 0 #f5f6f7; white-space: nowrap; }
.st-fill { flex: 1; height: 100%; border-right: 1px solid #a7abb0; }
.st-views { display: flex; align-items: center; margin-left: 8px; }
.vw { width: 18px; height: 19px; display: flex; align-items: center; justify-content: center; }
.vw-on { background: linear-gradient(#ffe9a0, #ffd75e); border: 1px solid #d59f33; border-radius: 3px; width: 19px; }
.zoom { display: flex; align-items: center; margin-left: 2px; width: 130px; }
.zb { width: 15px; height: 15px; border-radius: 50%; background: linear-gradient(#eceef1, #cdd0d4); border: 1px solid #c1c5ca; color: #a2a7ad; font: bold 14px/12px "Liberation Sans", sans-serif; text-align: center; flex: none; }
.ztrack { flex: 1; height: 1px; background: #8f959c; position: relative; }
.ztrack i { position: absolute; left: 50%; top: -3px; width: 1px; height: 7px; background: #8f959c; }
.grip { margin: 8px 2px 0 8px; }
```
